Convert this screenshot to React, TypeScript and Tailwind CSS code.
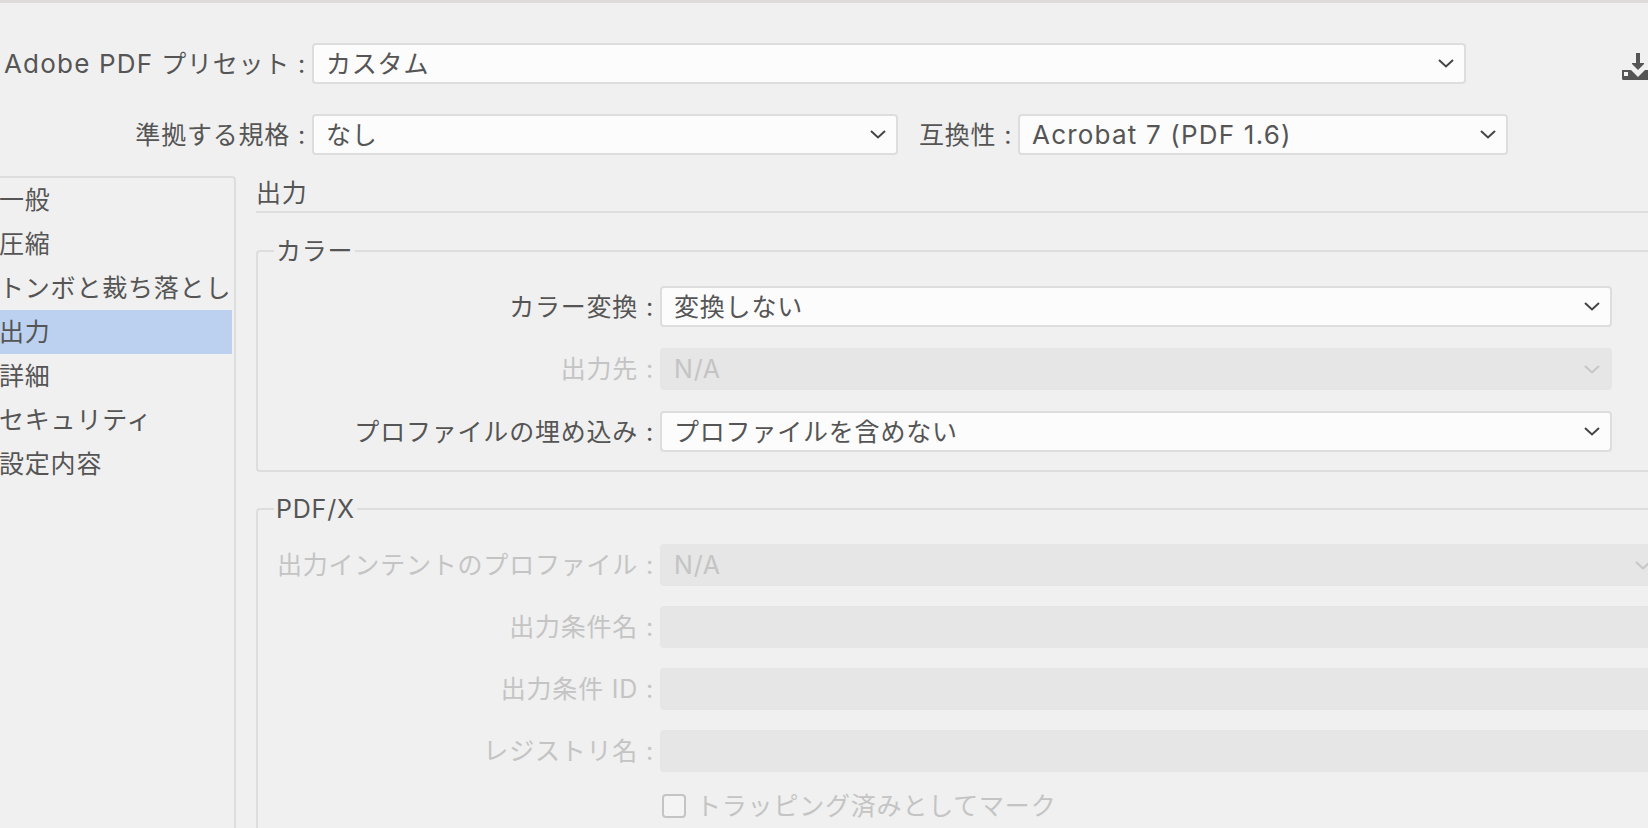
const sidebarItems = ["一般", "圧縮", "トンボと裁ち落とし", "出力", "詳細", "セキュリティ", "設定内容"];

function Chevron({ disabled }: { disabled?: boolean }) {
  return (
    <svg width="16" height="9" viewBox="0 0 16 9" fill="none" className="shrink-0">
      <path d="M1 1l7 6.5L15 1" stroke={disabled ? "#c6c6c6" : "#444444"} strokeWidth="2" />
    </svg>
  );
}

function Select({ value, width, disabled, plain }: { value?: React.ReactNode; width: string; disabled?: boolean; plain?: boolean }) {
  if (disabled) {
    return (
      <div className={`${width} h-[42px] shrink-0 rounded-[4px] bg-[#e6e6e6] pl-[14px] pr-[12px] flex items-center justify-between text-[#c4c4c4]`}>
        <span>{value}</span>
        {!plain && <Chevron disabled />}
      </div>
    );
  }
  return (
    <div className={`${width} h-[41px] shrink-0 rounded-[4px] border-2 border-[#dddddd] bg-[#fcfcfc] pl-[12px] pr-[10px] flex items-center justify-between text-[#555555]`}>
      <span>{value}</span>
      <Chevron />
    </div>
  );
}

function Row({ label, children, disabled }: { label: string; children: React.ReactNode; disabled?: boolean }) {
  return (
    <div className="flex items-center">
      <div className={`w-[402px] shrink-0 pr-[6px] text-right whitespace-nowrap ${disabled ? "text-[#c4c4c4]" : "text-[#555555]"}`}>
        {label} :
      </div>
      {children}
    </div>
  );
}

function DownloadIcon() {
  return (
    <svg width="34" height="28" viewBox="0 0 34 28" className="shrink-0">
      <path d="M0 17h34v8.5a1.5 1.5 0 0 1-1.500 1.500H1.500A1.500 1.500 0 0 1 0 25.500z" fill="#555555" />
      <rect x="2" y="19" width="4" height="4" fill="#f5f5f5" />
      <path d="M10 13l6 6 6-6" stroke="#f0f0f0" strokeWidth="7" fill="none" />
      <rect x="14" y="0" width="4" height="13" fill="#555555" />
      <path d="M10 11l6 6 6-6v-1H10z" fill="#555555" />
    </svg>
  );
}

export default function App() {
  return (
    <div
      className="w-[1648px] h-[828px] overflow-hidden bg-[#f0f0f0] text-[25px] leading-[36px] tracking-[0.8px] text-[#555555]"
      style={{ fontFamily: 'Inter, "Noto Sans CJK JP", sans-serif' }}
    >
      <div className="h-[3px] bg-[#dedcd8]" />

      <div className="flex items-center mt-[40px]">
        <div className="w-[312px] shrink-0 pr-[6px] text-right whitespace-nowrap">
          <span className="text-[26px] tracking-[1.2px]">Adobe PDF</span> プリセット :
        </div>
        <Select value="カスタム" width="w-[1154px]" />
        <div className="ml-[156px] mt-[7px]">
          <DownloadIcon />
        </div>
      </div>

      <div className="flex items-center mt-[30px]">
        <div className="w-[312px] shrink-0 pr-[6px] text-right whitespace-nowrap">準拠する規格 :</div>
        <Select value="なし" width="w-[586px]" />
        <div className="ml-[21px] w-[99px] shrink-0 whitespace-nowrap">互換性 :</div>
        <Select value={<span className="text-[26px] tracking-[1.2px]">Acrobat 7 (PDF 1.6)</span>} width="w-[490px]" />
      </div>

      <div className="flex mt-[21px]">
        <div className="w-[236px] h-[660px] shrink-0 border-t-2 border-r-2 border-[#dddddd] rounded-tr-[4px] pr-[2px]">
          {sidebarItems.map((item) => (
            <div
              key={item}
              className={`h-[44px] flex items-center whitespace-nowrap -indent-[1px] ${item === "出力" ? "bg-[#bcd1ef]" : ""}`}
            >
              {item}
            </div>
          ))}
        </div>

        <div className="ml-[20px] w-[1500px] shrink-0">
          <div className="h-[37px] border-b-2 border-[#dddddd] leading-[34px]">出力</div>

          <fieldset className="mt-[20px] border-2 border-[#dddddd] rounded-[4px] pb-[18px]">
            <legend className="ml-[16px] px-[2px]">カラー</legend>
            <div className="flex flex-col gap-[21px] mt-[17px]">
              <Row label="カラー変換">
                <Select value="変換しない" width="w-[952px]" />
              </Row>
              <Row label="出力先" disabled>
                <Select value="N/A" width="w-[952px]" disabled />
              </Row>
              <Row label="プロファイルの埋め込み">
                <Select value="プロファイルを含めない" width="w-[952px]" />
              </Row>
            </div>
          </fieldset>

          <fieldset className="mt-[19px] border-2 border-[#dddddd] rounded-[4px] pb-[18px]">
            <legend className="ml-[16px] px-[2px]">PDF/X</legend>
            <div className="flex flex-col gap-[20px] mt-[17px]">
              <Row label="出力インテントのプロファイル" disabled>
                <Select value="N/A" width="w-[1003px]" disabled />
              </Row>
              <Row label="出力条件名" disabled>
                <Select width="w-[1003px]" disabled plain />
              </Row>
              <Row label="出力条件 ID" disabled>
                <Select width="w-[1003px]" disabled plain />
              </Row>
              <Row label="レジストリ名" disabled>
                <Select width="w-[1003px]" disabled plain />
              </Row>
              <div className="flex items-center pl-[404px] -mt-[4px] text-[#c4c4c4]">
                <div className="w-[24px] h-[24px] rounded-[4px] border-2 border-[#c4c4c4] bg-[#f4f4f4] mr-[10px]" />
                トラッピング済みとしてマーク
              </div>
            </div>
          </fieldset>
        </div>
      </div>
    </div>
  );
}
